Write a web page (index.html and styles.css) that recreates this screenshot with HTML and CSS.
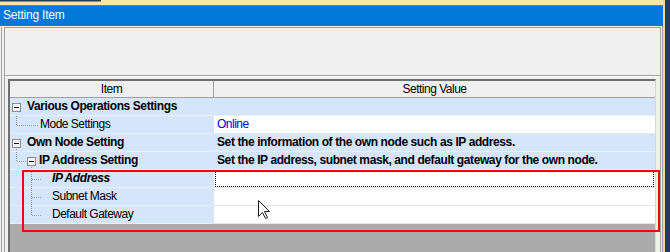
FILE: index.html
```html
<!DOCTYPE html>
<html>
<head>
<meta charset="utf-8">
<link rel="stylesheet" href="styles.css">
</head>
<body>
<div class="screen">
  <div class="win">
    <div class="strip"><div class="strip-dark"></div></div>
    <div class="title">Setting Item</div>
    <div class="frame">
      <div class="frame-in">
        <div class="group">
          <div class="group-top"></div>
          <div class="group-body">
            <div class="grid">
              <div class="hdr">
                <div class="hcell c1">Item</div>
                <div class="hcell">Setting Value</div>
              </div>

              <div class="row">
                <div class="name">
                  <svg class="tree" width="17" height="17"><rect class="box" x="2.5" y="5.5" width="8" height="8"/><path class="minus" d="M4 9.5h5"/></svg>
                  <span class="b">Various Operations Settings</span>
                </div>
                <div class="val blue"></div>
              </div>

              <div class="row">
                <div class="name">
                  <svg class="tree" width="30" height="17"><path class="dot" d="M6.5 0v9M7 9.5h21"/></svg>
                  <span>Mode Settings</span>
                </div>
                <div class="val white online">Online</div>
              </div>

              <div class="row">
                <div class="name">
                  <svg class="tree" width="17" height="17"><rect class="box" x="2.5" y="5.5" width="8" height="8"/><path class="minus" d="M4 9.5h5"/><path class="dot" d="M6.5 15v2"/></svg>
                  <span class="b">Own Node Setting</span>
                </div>
                <div class="val blue b">Set the information of the own node such as IP address.</div>
              </div>

              <div class="row">
                <div class="name">
                  <svg class="tree" width="29" height="17"><path class="dot" d="M6.5 0v9M7 9.5h10"/><rect class="box" x="17.5" y="5.5" width="8" height="8"/><path class="minus" d="M19 9.5h5"/><path class="dot" d="M21.5 15v2"/></svg>
                  <span class="b">IP Address Setting</span>
                </div>
                <div class="val blue b">Set the IP address, subnet mask, and default gateway for the own node.</div>
              </div>

              <div class="row">
                <div class="name">
                  <svg class="tree" width="42" height="17"><path class="dot" d="M21.5 0v17M22 9.5h10"/></svg>
                  <span class="bi">IP Address</span>
                </div>
                <div class="val white focus"></div>
              </div>

              <div class="row">
                <div class="name">
                  <svg class="tree" width="42" height="17"><path class="dot" d="M21.5 0v17M22 9.5h10"/></svg>
                  <span>Subnet Mask</span>
                </div>
                <div class="val white"></div>
              </div>

              <div class="row">
                <div class="name">
                  <svg class="tree" width="42" height="17"><path class="dot" d="M21.5 0v9M22 9.5h10"/></svg>
                  <span>Default Gateway</span>
                </div>
                <div class="val white"></div>
              </div>
            </div>
          </div>
        </div>
      </div>
    </div>
  </div>

  <div class="highlight"></div>
  <svg class="cursor" width="13" height="20" viewBox="0 0 13 20"><path d="M0.5 0.5 L0.5 16.5 L4.5 12.5 L7.5 18.5 L9.5 17.5 L6.5 11.5 L11.5 11.5 Z" fill="#fff" stroke="#1e1e1e" stroke-width="1" stroke-linejoin="miter"/></svg>
</div>
</body>
</html>
```

FILE: styles.css
```css
html, body {
  margin: 0;
  padding: 0;
}
body {
  width: 670px;
  height: 252px;
  overflow: hidden;
  background: #263955;
  font-family: "Liberation Sans", Arial, sans-serif;
}
.screen {
  position: relative;
  width: 670px;
  height: 252px;
}
.win {
  width: 663px;
  height: 252px;
  border-right: 2px solid #f3d894;
  display: flex;
  flex-direction: column;
  background: #f0f0f0;
}
.strip {
  height: 5px;
  background: #fbe5aa;
  border-bottom: 1px solid #7a7a7a;
}
.strip-dark {
  width: 101px;
  height: 1px;
  background: #263955;
  border-bottom: 1px solid #8090a8;
}
.title {
  height: 20px;
  line-height: 19px;
  background: #0078d7;
  color: #ffffff;
  font-size: 12px;
  letter-spacing: -0.2px;
  padding-left: 3px;
}
.frame {
  flex: 1;
  min-height: 0;
  background: #f0f0f0;
  padding: 1px 0 0 1px;
  border-right: 1px solid #a0a0a0;
  display: flex;
}
.frame-in {
  flex: 1;
  border-left: 1px solid #a0a0a0;
  padding: 0 1px 0 2px;
  display: flex;
}
.group {
  flex: 1;
  border: 1px solid #a0a0a0;
  border-bottom: none;
  display: flex;
  flex-direction: column;
}
.group-top {
  height: 47px;
  border-bottom: 1px solid #a0a0a0;
  box-shadow: 0 1px 0 #ffffff;
}
.group-body {
  flex: 1;
  padding: 3px 4px 0 3px;
  display: flex;
  min-height: 0;
}
.grid {
  flex: 1;
  background: #ababab;
  border-top: 2px solid #6f6f6f;
  border-left: 2px solid #6f6f6f;
  border-right: 1px solid #d8d8d8;
  display: flex;
  flex-direction: column;
  font-size: 12px;
  letter-spacing: -0.5px;
  color: #000;
}
.hdr {
  display: grid;
  grid-template-columns: 204px 1fr;
  height: 17px;
  background: #f0f0f0;
  border-bottom: 1px solid #a0a0a0;
  box-sizing: border-box;
}
.hcell {
  text-align: center;
  line-height: 16px;
}
.hcell.c1 {
  border-right: 1px solid #a0a0a0;
}
.row {
  display: grid;
  grid-template-columns: 204px 1fr;
  height: 18px;
}
.name {
  background: #d5e5fb;
  border-right: 1px solid #d5e5fb;
  border-bottom: 1px solid #e8f0fc;
  display: flex;
  align-items: center;
  height: 17px;
  line-height: 17px;
  white-space: nowrap;
}
.tree {
  flex: none;
  display: block;
}
.tree .box {
  fill: #f4f4f4;
  stroke: #8c8c8c;
  stroke-width: 1;
}
.tree .minus {
  stroke: #1a1a1a;
  stroke-width: 1;
}
.tree .dot {
  stroke: #9a9a9a;
  stroke-width: 1;
  stroke-dasharray: 1 1;
  fill: none;
}
.name > span {
  padding-left: 0;
}
.val {
  height: 17px;
  line-height: 17px;
  padding-left: 3px;
  border-bottom: 1px solid #e6e6e6;
  white-space: nowrap;
  overflow: hidden;
}
.val.blue {
  background: #d5e5fb;
  border-bottom-color: #e8f0fc;
}
.val.white {
  background: #ffffff;
}
.online {
  color: #0000ff;
}
.b {
  font-weight: bold;
  letter-spacing: -0.4px;
}
.bi {
  font-weight: bold;
  font-style: italic;
  letter-spacing: -0.4px;
}
.focus {
  outline: 1px dotted #000;
  outline-offset: -2px;
}
.highlight {
  position: absolute;
  left: 22px;
  top: 170px;
  width: 634px;
  height: 58px;
  border: 2px solid #ff0000;
}
.cursor {
  position: absolute;
  left: 258px;
  top: 200px;
}
```
